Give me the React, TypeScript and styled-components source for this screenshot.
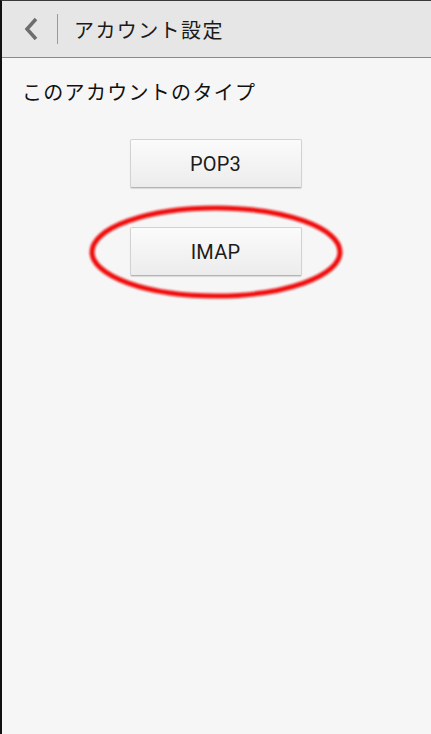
import React from 'react';
import { styled, createGlobalStyle } from 'styled-components';

const GlobalStyle = createGlobalStyle`
  html, body {
    margin: 0;
    padding: 0;
    background: #f6f6f6;
  }
  body {
    font-family: "Roboto", "Noto Sans CJK JP", sans-serif;
  }
`;

const Screen = styled.div`
  width: 431px;
  height: 734px;
  box-sizing: border-box;
  border-top: 1px solid #3a3a3a;
  border-left: 2px solid #111;
  background: #f6f6f6;
  display: flex;
  flex-direction: column;
`;

const Header = styled.header`
  height: 56px;
  background: #e6e6e6;
  border-bottom: 1px solid #8a8a8a;
  display: flex;
  align-items: center;
  padding-left: 18px;
`;

const BackButton = styled.div`
  width: 22px;
  height: 30px;
  display: flex;
  align-items: center;
  justify-content: center;
`;

const Divider = styled.div`
  width: 1px;
  height: 30px;
  background: #9a9a9a;
  margin: 0 16px 0 15px;
`;

const Title = styled.h1`
  margin: 0;
  font-size: 20px;
  font-weight: 400;
  color: #1a1a1a;
  letter-spacing: 1.4px;
`;

const Content = styled.main`
  flex: 1;
  padding: 22px 0 0 20px;
`;

const Label = styled.div`
  font-size: 20px;
  color: #111;
  letter-spacing: 1.3px;
  line-height: 26px;
`;

const Options = styled.div`
  display: flex;
  flex-direction: column;
  align-items: center;
  gap: 39px;
  margin-top: 33px;
  padding-right: 22px;
  position: relative;
`;

const OptionButton = styled.button`
  width: 172px;
  height: 49px;
  border: 1px solid #d2d2d2;
  border-bottom-color: #b4b4b4;
  border-radius: 2px;
  background: linear-gradient(#fbfbfb, #ececec);
  box-shadow: 0 1px 1px rgba(0, 0, 0, 0.12);
  font-family: "Roboto", sans-serif;
  font-size: 20px;
  color: #1c1c1c;
  letter-spacing: 0.2px;
`;

const Highlight = styled.svg`
  position: absolute;
  left: 66px;
  top: 65px;
  overflow: visible;
`;

const App: React.FC = () => {
  return (
    <>
      <GlobalStyle />
      <Screen>
        <Header>
          <BackButton>
            <svg width="16" height="24" viewBox="0 0 16 24">
              <path d="M13 2 L4 12 L13 22" fill="none" stroke="#6e6e6e" strokeWidth="3.5" />
            </svg>
          </BackButton>
          <Divider />
          <Title>アカウント設定</Title>
        </Header>
        <Content>
          <Label>このアカウントのタイプ</Label>
          <Options>
            <OptionButton>POP3</OptionButton>
            <OptionButton>IMAP</OptionButton>
            <Highlight width="256" height="96" viewBox="0 0 256 96">
              <defs>
                <filter id="soft" x="-10%" y="-20%" width="120%" height="140%">
                  <feGaussianBlur stdDeviation="0.8" />
                </filter>
              </defs>
              <ellipse cx="128" cy="48" rx="124" ry="44" fill="none" stroke="#f01010" strokeWidth="5" filter="url(#soft)" />
            </Highlight>
          </Options>
        </Content>
      </Screen>
    </>
  );
};

export default App;
